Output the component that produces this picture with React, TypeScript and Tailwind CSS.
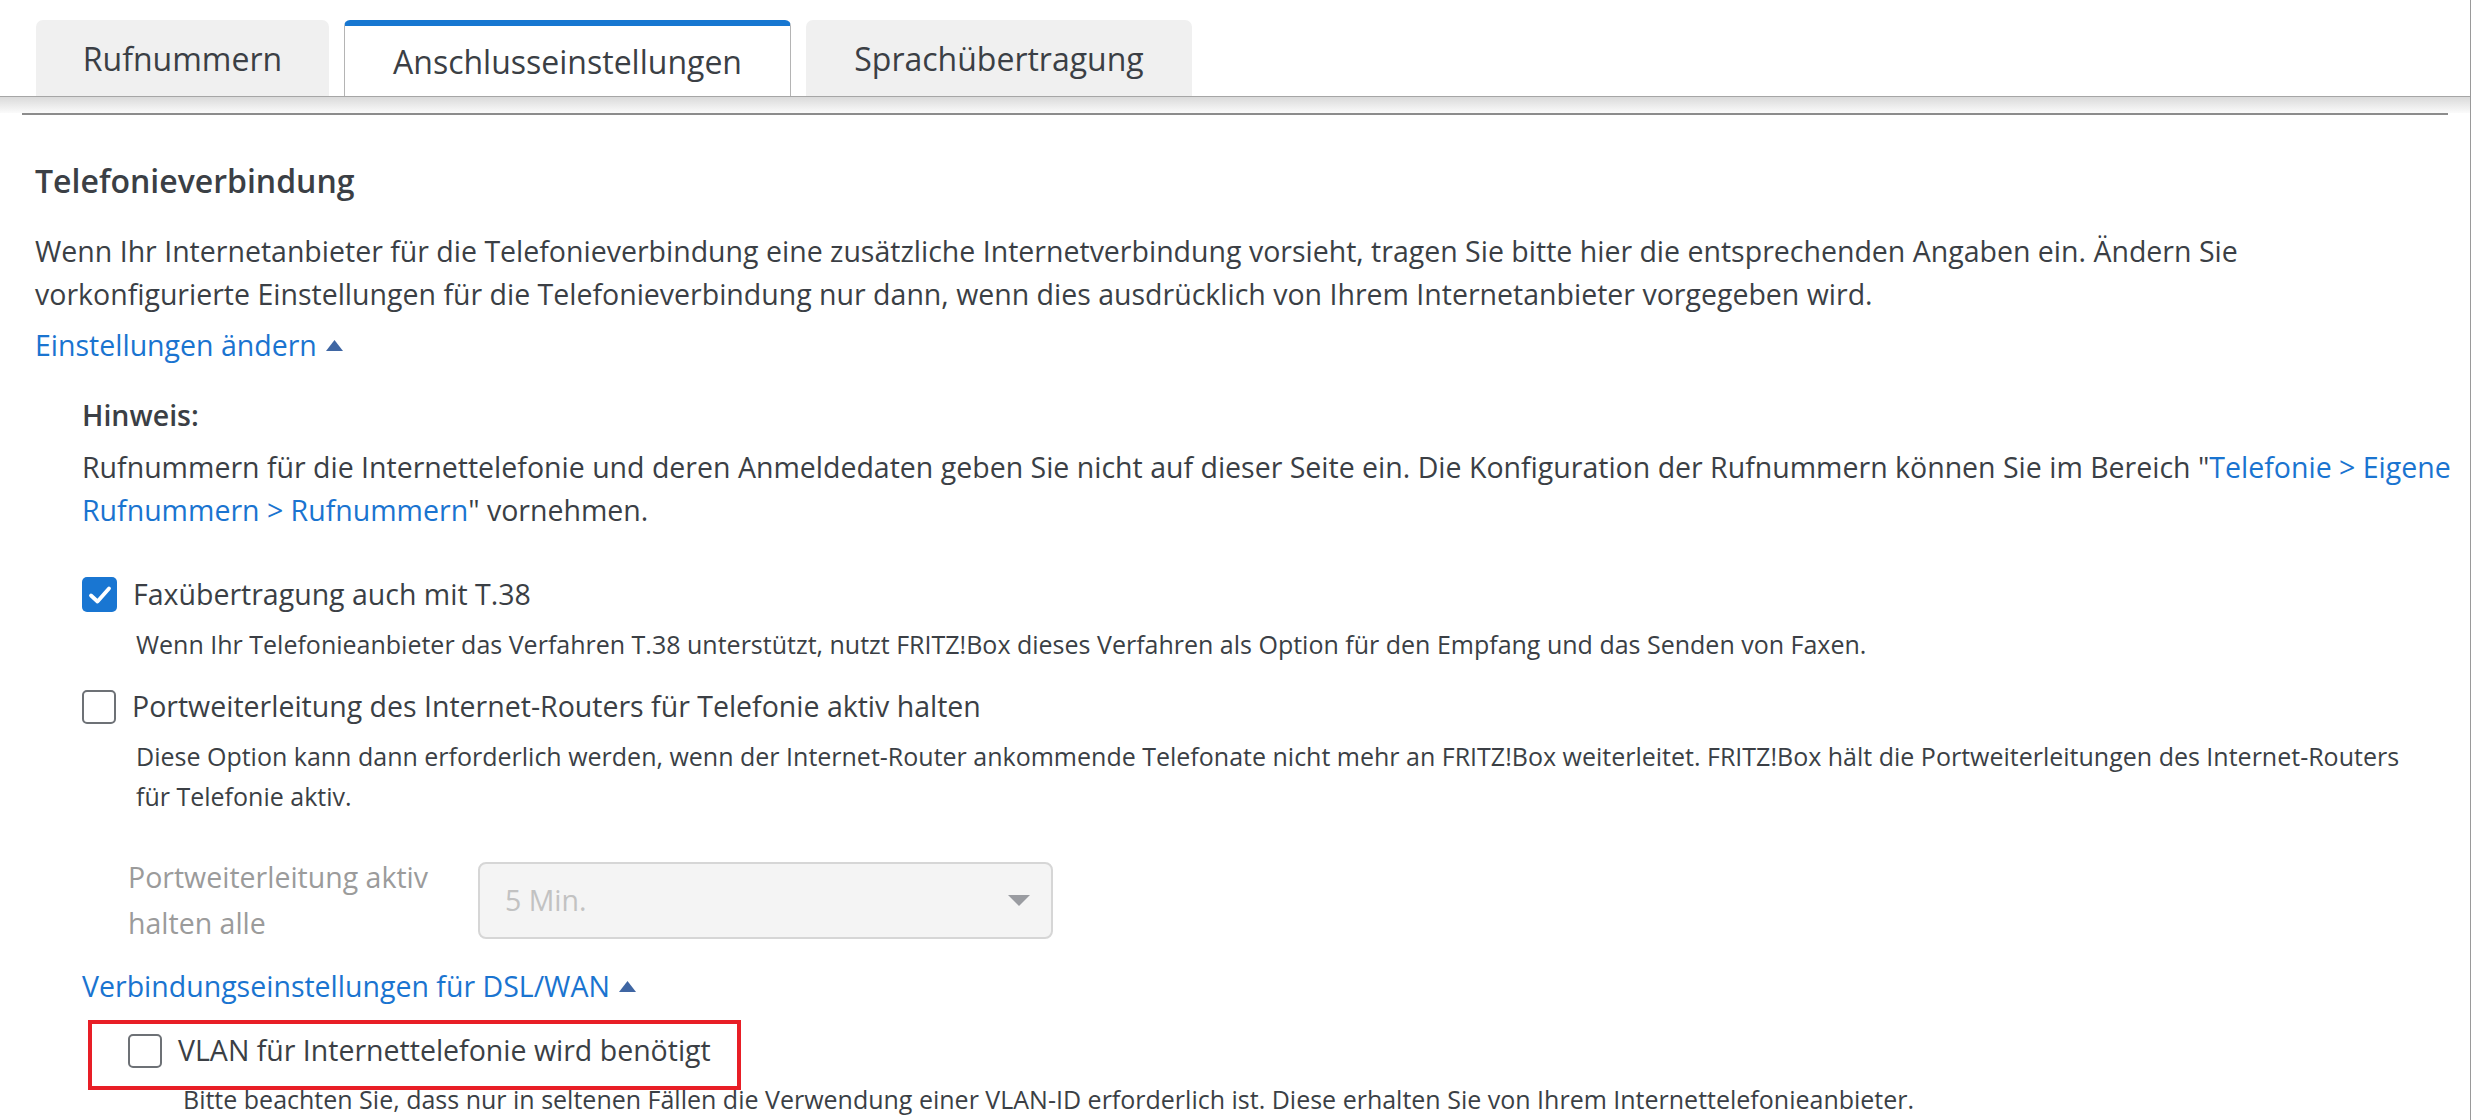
import React from "react";

type CheckProps = {
  checked?: boolean;
};

const Checkbox = ({ checked }: CheckProps) => {
  if (checked) {
    return (
      <span className="flex h-[35px] w-[35px] shrink-0 items-center justify-center rounded-[5px] bg-[#1976d2]">
        <svg width="24" height="20" viewBox="0 0 24 20" fill="none">
          <polyline
            points="3,10.5 9.5,16.5 21,3.5"
            stroke="#fff"
            strokeWidth="3.8"
            strokeLinecap="round"
            strokeLinejoin="round"
          />
        </svg>
      </span>
    );
  }
  return (
    <span className="block h-[34px] w-[34px] shrink-0 rounded-[5px] border-[2.5px] border-[#6d7176] bg-white" />
  );
};

const UpArrow = () => (
  <svg width="17" height="11" viewBox="0 0 17 11" className="ml-[9px] inline-block">
    <polygon points="8.5,0 17,11 0,11" fill="#3f66a3" />
  </svg>
);

const tabs = [
  { label: "Rufnummern", w: "w-[293px]", active: false },
  { label: "Anschlusseinstellungen", w: "w-[447px]", active: true },
  { label: "Sprachübertragung", w: "w-[386px]", active: false },
];

const App = () => {
  return (
    <div className="min-h-[1120px] w-[2471px] overflow-hidden border-r border-[#9a9a9a] bg-white font-['Open_Sans',sans-serif] text-[#3b3f45]">
      {/* TABS */}
      <div className="flex gap-[15px] pl-[36px] pt-[20px]">
        {tabs.map((t) =>
          t.active ? (
            <div
              key={t.label}
              className={`${t.w} flex h-[76px] items-center justify-center rounded-t-[6px] border-x border-t-[6px] border-x-[#b4b4b4] border-t-[#1777d1] bg-white pt-[2px] text-[32px]`}
            >
              {t.label}
            </div>
          ) : (
            <div
              key={t.label}
              className={`${t.w} flex h-[76px] items-center justify-center rounded-t-[7px] bg-[#f0f0f0] pt-[2px] text-[32px]`}
            >
              {t.label}
            </div>
          )
        )}
      </div>
      <div className="h-[17px] border-t border-[#a6a6a6] bg-linear-to-b from-[#dadada] to-[#fbfbfb]" />
      <div className="mx-[22px] h-[2px] bg-[#8c8c8c]" />

      {/* CONTENT */}
      <div className="pl-[35px] pr-[4px]">
        <h2 className="mt-[46px] text-[32px] font-semibold leading-[40px]">
          Telefonieverbindung
        </h2>
        <p className="mt-[29px] text-[28.5px] leading-[43px]">
          Wenn Ihr Internetanbieter für die Telefonieverbindung eine zusätzliche
          Internetverbindung vorsieht, tragen Sie bitte hier die entsprechenden
          Angaben ein. Ändern Sie
          <br />
          vorkonfigurierte Einstellungen für die Telefonieverbindung nur dann,
          wenn dies ausdrücklich von Ihrem Internetanbieter vorgegeben wird.
        </p>
        <div className="mt-[8px] flex items-center text-[28.5px] leading-[43px] text-[#1a74d0]">
          Einstellungen ändern
          <UpArrow />
        </div>

        <div className="pl-[47px]">
          <p className="mt-[27px] text-[28.5px] font-semibold leading-[43px]">
            Hinweis:
          </p>
          <p className="mt-[9px] whitespace-nowrap text-[28.5px] leading-[43px]">
            Rufnummern für die Internettelefonie und deren Anmeldedaten geben Sie
            nicht auf dieser Seite ein. Die Konfiguration der Rufnummern können
            Sie im Bereich "
            <span className="text-[#1a74d0]">Telefonie &gt; Eigene</span>
            <br />
            <span className="text-[#1a74d0]">Rufnummern &gt; Rufnummern</span>"
            vornehmen.
          </p>

          {/* FAX */}
          <label className="mt-[41px] flex h-[43px] items-center gap-[16px] text-[28.5px]">
            <Checkbox checked />
            Faxübertragung auch mit T.38
          </label>
          <p className="mt-[8px] pl-[54px] text-[25px] leading-[40px]">
            Wenn Ihr Telefonieanbieter das Verfahren T.38 unterstützt, nutzt
            FRITZ!Box dieses Verfahren als Option für den Empfang und das Senden
            von Faxen.
          </p>

          {/* PORT FORWARDING */}
          <label className="mt-[21px] flex h-[43px] items-center gap-[16px] text-[28.5px]">
            <Checkbox />
            Portweiterleitung des Internet-Routers für Telefonie aktiv halten
          </label>
          <p className="mt-[8px] whitespace-nowrap pl-[54px] text-[25px] leading-[40px]">
            Diese Option kann dann erforderlich werden, wenn der Internet-Router
            ankommende Telefonate nicht mehr an FRITZ!Box weiterleitet. FRITZ!Box
            hält die Portweiterleitungen des Internet-Routers
            <br />
            für Telefonie aktiv.
          </p>

          <div className="mt-[38px] flex items-center pl-[46px]">
            <span className="mr-[14px] w-[336px] text-[28.5px] leading-[46px] text-[#9b9b9b]">
              Portweiterleitung aktiv halten alle
            </span>
            <div className="flex h-[77px] w-[575px] items-center justify-between rounded-[8px] border-2 border-[#d6d6d6] bg-[#f4f4f4] pl-[25px] pr-[21px] text-[28.5px] text-[#c2c2c2]">
              5 Min.
              <svg width="22" height="11" viewBox="0 0 22 11">
                <polygon points="0,0 22,0 11,11" fill="#9a9ca1" />
              </svg>
            </div>
          </div>

          {/* DSL / WAN */}
          <div className="mt-[19px] flex items-center text-[28.5px] leading-[43px] text-[#1a74d0]">
            Verbindungseinstellungen für DSL/WAN
            <UpArrow />
          </div>

          <div className="pl-[46px]">
            <label className="relative mt-[21px] flex h-[43px] items-center gap-[16px] text-[28.5px]">
              <span className="pointer-events-none absolute -left-[40px] -top-[9px] h-[70px] w-[653px] border-4 border-[#e81e26]" />
              <Checkbox />
              VLAN für Internettelefonie wird benötigt
            </label>
            <p className="mt-[7px] pl-[55px] text-[25px] leading-[40px]">
              Bitte beachten Sie, dass nur in seltenen Fällen die Verwendung einer
              VLAN-ID erforderlich ist. Diese erhalten Sie von Ihrem
              Internettelefonieanbieter.
            </p>
          </div>
        </div>
      </div>
    </div>
  );
};

export default App;
